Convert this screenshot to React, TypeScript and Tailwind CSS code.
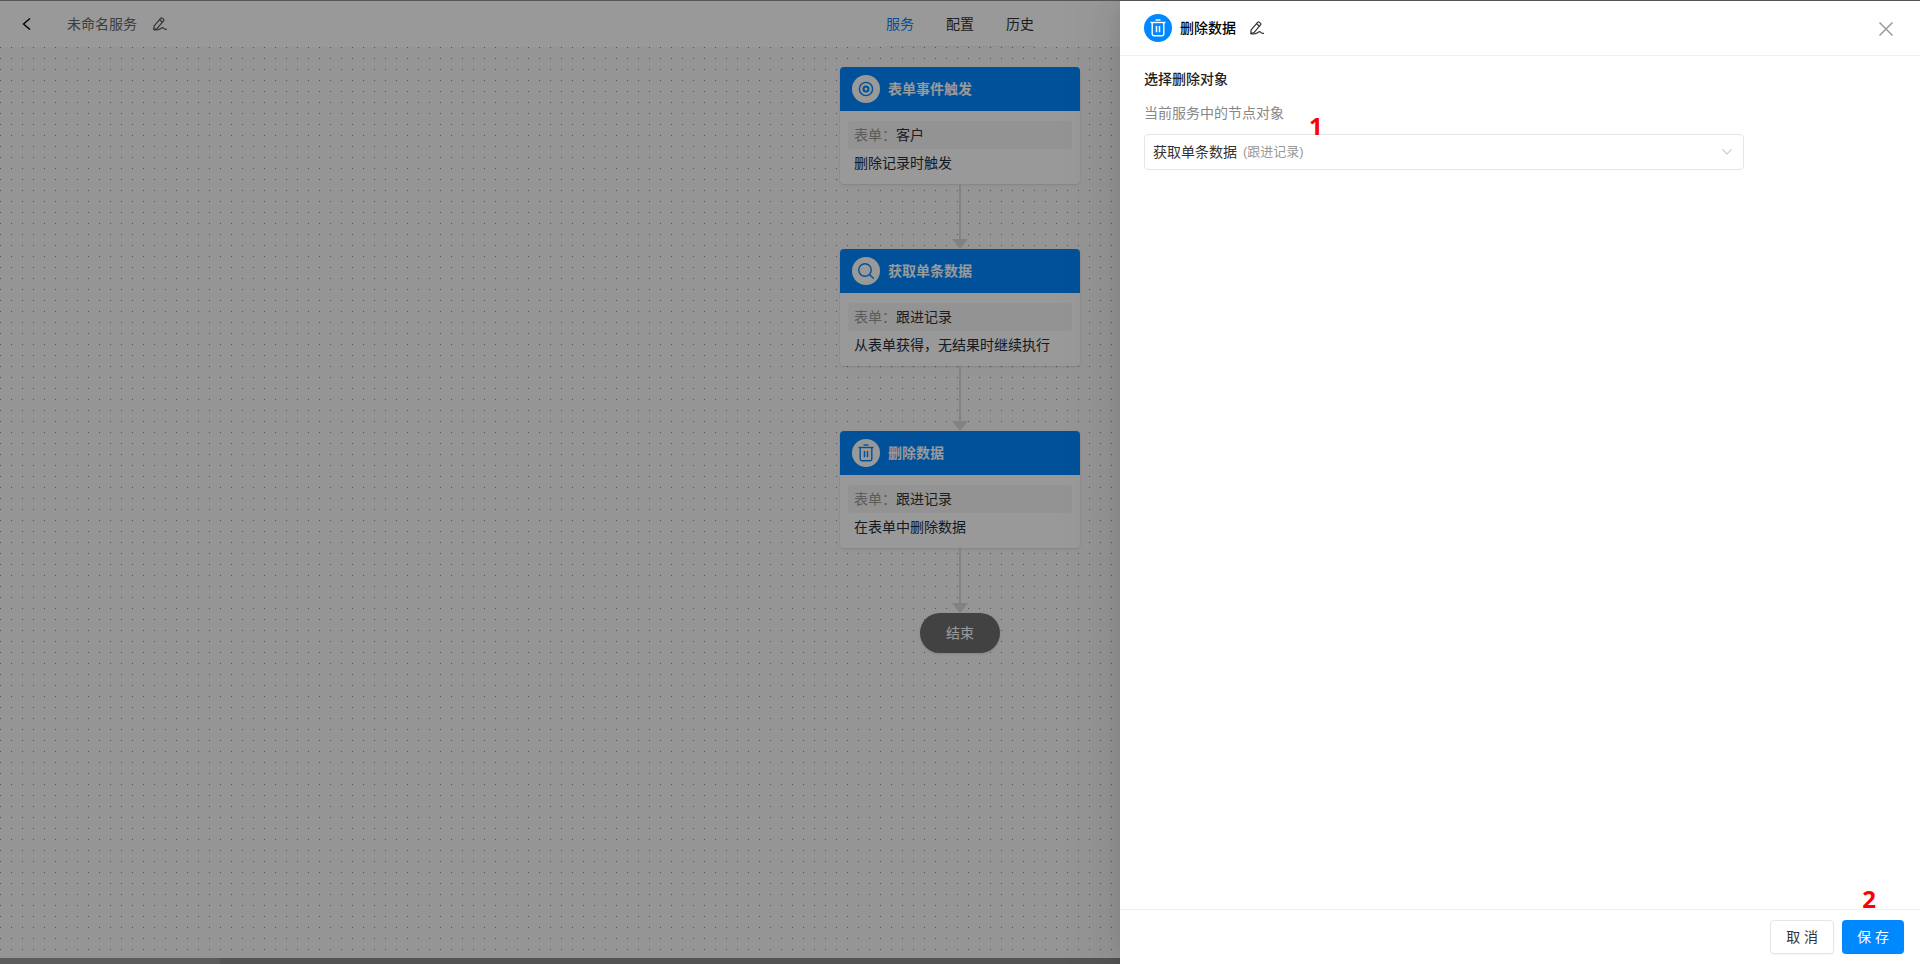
import { ReactNode, useState } from "react";

type IconProps = { className?: string };

const TrashIcon = ({ className }: IconProps) => (
  <svg className={className} viewBox="0 0 16 18" fill="none" stroke="currentColor">
    <path d="M5.5 1h5" strokeWidth="1.4" />
    <path d="M.5 3.5h15" strokeWidth="1.4" />
    <path d="M2.2 3.5v11.6a1.6 1.6 0 0 0 1.6 1.6h8.4a1.6 1.6 0 0 0 1.6-1.6V3.5" strokeWidth="1.4" />
    <path d="M6.5 7v6.2M9.5 7v6.2" strokeWidth="1.5" />
  </svg>
);

const SearchIcon = ({ className }: IconProps) => (
  <svg className={className} viewBox="0 0 16 16" fill="none" stroke="currentColor" strokeWidth="1.4">
    <circle cx="7" cy="7" r="6.2" />
    <path d="M11.4 11.4l4 3.8" strokeLinecap="round" />
  </svg>
);

const TargetIcon = ({ className }: IconProps) => (
  <svg className={className} viewBox="0 0 16 16" fill="none" stroke="currentColor">
    <circle cx="8" cy="8" r="6.6" strokeWidth="1.4" />
    <circle cx="8" cy="8" r="2.5" strokeWidth="2" />
  </svg>
);

const EditIcon = ({ className }: IconProps) => (
  <svg
    className={className}
    viewBox="0 0 14 14"
    fill="none"
    stroke="currentColor"
    strokeWidth="1.2"
    strokeLinecap="round"
    strokeLinejoin="round"
  >
    <path d="M1 9.2L7.6 1.4a1.3 1.3 0 0 1 1.8-.1l1 .8a1.3 1.3 0 0 1 .1 1.8L4 11.6l-3.1 1z" />
    <path d="M6.6 2.8l2.6 2.2" />
    <path d="M.9 12.6c2.3.6 4.3.6 6-.5 1.5-1 2.4-1.8 3.2-1.4.8.5.3 1.9 3.4 1.7" />
  </svg>
);

const BackIcon = ({ className }: IconProps) => (
  <svg className={className} viewBox="0 0 8 12" fill="none" stroke="currentColor" strokeWidth="1.4">
    <path d="M7.5.5L1 6l6.5 5.5" />
  </svg>
);

const CloseIcon = ({ className }: IconProps) => (
  <svg className={className} viewBox="0 0 14 14" fill="none" stroke="currentColor" strokeWidth="1.5">
    <path d="M.5.5l13 13M13.5.5l-13 13" />
  </svg>
);

const ChevronIcon = ({ className }: IconProps) => (
  <svg className={className} viewBox="0 0 10 6" fill="none" stroke="currentColor" strokeWidth="1.1">
    <path d="M.5.5L5 5l4.5-4.5" />
  </svg>
);

type FlowNode = { title: string; form: string; desc: string; icon: ReactNode };

const nodes: FlowNode[] = [
  {
    title: "表单事件触发",
    form: "客户",
    desc: "删除记录时触发",
    icon: <TargetIcon className="h-4 w-4" />,
  },
  {
    title: "获取单条数据",
    form: "跟进记录",
    desc: "从表单获得，无结果时继续执行",
    icon: <SearchIcon className="h-4 w-4" />,
  },
  {
    title: "删除数据",
    form: "跟进记录",
    desc: "在表单中删除数据",
    icon: <TrashIcon className="h-[18px] w-4" />,
  },
];

const NodeCard = ({ node }: { node: FlowNode }) => (
  <div className="w-60 rounded bg-white shadow">
    <div className="flex h-11 items-center gap-2 rounded-t bg-[#0088ff] px-3">
      <span className="flex h-7 w-7 items-center justify-center rounded-full bg-white text-[#0088ff]">
        {node.icon}
      </span>
      <span className="font-bold text-white">{node.title}</span>
    </div>
    <div className="px-2 pt-2.5 pb-[7px] leading-7">
      <p className="rounded bg-[#f5f5f5] px-1.5 text-[#333]">
        <span className="text-[#999]">表单：</span>
        {node.form}
      </p>
      <p className="px-1.5 text-[#1f2d3d]">{node.desc}</p>
    </div>
  </div>
);

const Connector = () => (
  <div className="flex h-[65px] flex-col items-center text-[#d9d9d9]">
    <div className="w-0.5 flex-1 bg-current" />
    <svg className="h-2.5 w-4" viewBox="0 0 16 10" fill="currentColor">
      <path d="M0 0h16L8 10z" />
    </svg>
  </div>
);

const tabs = ["服务", "配置", "历史"];

const TopBar = () => {
  const [active, setActive] = useState("服务");

  return (
    <header className="grid h-[46px] grid-cols-[1fr_auto_1fr] bg-white">
      <div className="flex items-center pl-[22px]">
        <button aria-label="返回" className="text-black">
          <BackIcon className="h-3 w-[9px]" />
        </button>
        <span className="ml-9 text-[#666]">未命名服务</span>
        <button aria-label="重命名" className="ml-4 text-[#555]">
          <EditIcon className="h-3.5 w-3.5" />
        </button>
      </div>
      <nav className="flex gap-8 border-b border-[#f0f0f0]">
        {tabs.map((tab) => (
          <button
            key={tab}
            onClick={() => setActive(tab)}
            className={tab === active ? "text-[#0088ff]" : "text-[#333]"}
          >
            {tab}
          </button>
        ))}
      </nav>
    </header>
  );
};

const Drawer = () => (
  <aside className="relative flex w-[800px] flex-col bg-white shadow-[-6px_0_16px_-8px_rgba(0,0,0,0.08),-9px_0_28px_0_rgba(0,0,0,0.05),-12px_0_48px_16px_rgba(0,0,0,0.03)]">
    <div className="flex h-[55px] items-center border-b border-[#f0f0f0] pr-[27px] pl-6">
      <span className="flex h-7 w-7 items-center justify-center rounded-full bg-[#0088ff] text-white">
        <TrashIcon className="h-[18px] w-4" />
      </span>
      <h2 className="ml-2 font-medium text-black">删除数据</h2>
      <button aria-label="重命名节点" className="ml-3.5 text-[#333]">
        <EditIcon className="h-3.5 w-3.5" />
      </button>
      <button aria-label="关闭" className="ml-auto pt-0.5 text-[#999]">
        <CloseIcon className="h-3.5 w-3.5" />
      </button>
    </div>

    <div className="flex-1 px-6 pt-3">
      <h3 className="leading-[22px] font-medium text-[#222]">选择删除对象</h3>
      <label htmlFor="target" className="mt-3 block leading-[22px] text-[#888]">
        当前服务中的节点对象
      </label>
      <div className="relative mt-2.5 w-[600px] max-w-full">
        <select
          id="target"
          className="h-9 w-full appearance-none rounded border border-[#e5e5e5] bg-white px-2 text-[#333]"
        >
          <option>获取单条数据</option>
        </select>
        <span className="pointer-events-none absolute inset-y-0 left-[99px] flex items-center text-[13px] text-[#999]">
          (跟进记录)
        </span>
        <ChevronIcon className="pointer-events-none absolute top-[15px] right-3 h-1.5 w-2.5 text-[#ccc]" />
        <span className="absolute -top-6 left-[165px] font-['Open_Sans'] text-2xl leading-8 font-bold text-[#ff0000]">
          1
        </span>
      </div>
    </div>

    <div className="relative flex h-[55px] items-center justify-end gap-2 border-t border-[#f0f0f0] px-4">
      <button className="h-[34px] rounded border border-[#e5e5e5] bg-white px-[15px] text-[#333] shadow-xs">
        取 消
      </button>
      <button className="h-[34px] rounded bg-[#0088ff] px-[15px] text-white shadow-xs">保 存</button>
      <span className="absolute -top-[27px] right-11 font-['Open_Sans'] text-2xl leading-8 font-bold text-[#ff0000]">
        2
      </span>
    </div>
  </aside>
);

const App = () => {
  return (
    <div className="relative flex h-screen flex-col overflow-hidden border-t border-[#555] font-['Liberation_Sans','Noto_Sans_CJK_SC',sans-serif] text-sm">
      <TopBar />
      <main className="flex flex-1 flex-col items-center bg-[#f9f9f9] bg-[conic-gradient(from_270deg_at_1px_1px,#80889c_90deg,transparent_0)] bg-size-[11px_11px] pt-5">
        {nodes.map((node) => (
          <div key={node.title} className="flex flex-col items-center">
            <NodeCard node={node} />
            <Connector />
          </div>
        ))}
        <div className="h-10 w-20 rounded-full bg-[#6e6e6e] text-center leading-10 text-white shadow">
          结束
        </div>
      </main>
      <div className="h-1.5 bg-[#8a8a8a]">
        <div className="h-full w-[220px] bg-[#999]" />
      </div>

      <div className="absolute inset-0 flex justify-end bg-black/40">
        <Drawer />
      </div>
    </div>
  );
};

export default App;
